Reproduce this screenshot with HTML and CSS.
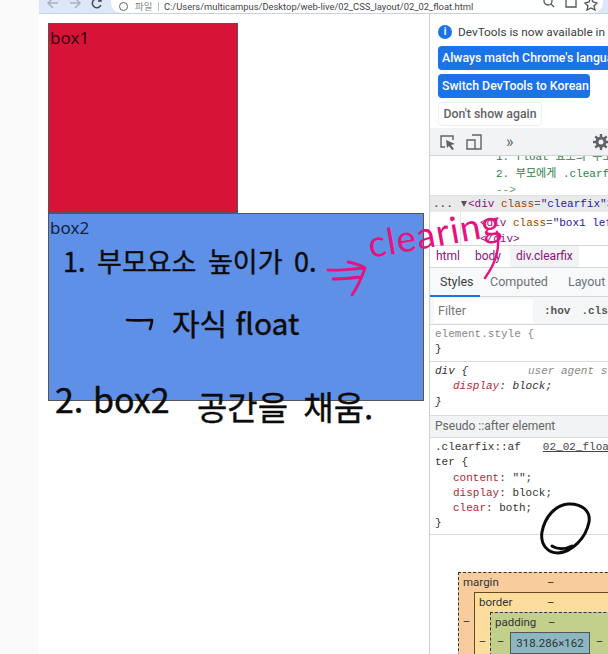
FILE: index.html
```html
<!DOCTYPE html>
<html lang="ko">
<head>
    <meta charset="UTF-8">
    <title>02_02_float.html</title>
    <link rel="stylesheet" href="styles.css">
</head>
<body>
    <div class="side-strip"></div>

    <div class="browser">
        <!-- browser toolbar, cut off by the top of the picture -->
        <header class="chrome">
            <svg class="nav-icons" width="72" height="13" viewBox="0 0 72 13" fill="none" stroke-width="1.5">
                <path d="M19 3H10M14 -2L9 3L14 8" stroke="#a9b2bf"/>
                <path d="M31 3H40M36 -2L41 3L36 8" stroke="#a9b2bf"/>
                <path d="M61 0A4.5 4.5 0 1 0 62 5M62 -2V1H59" stroke="#444a52"/>
            </svg>
            <div class="address">
                <span class="info-dot"></span>
                <span class="scheme">파일</span>
                <span class="sep"></span>
                <span class="url">C:/Users/multicampus/Desktop/web-live/02_CSS_layout/02_02_float.html</span>
                <svg class="addr-icons" width="56" height="13" viewBox="0 0 56 13" fill="none" stroke="#555" stroke-width="1.3">
                    <circle cx="5" cy="1" r="4"/>
                    <path d="M8 4L11 7"/>
                    <path d="M23 -2H33V7H23Z"/>
                    <path d="M48 -3L50 2L54 3L51 6L52 10L48 8L44 10L45 6L42 3L46 2Z"/>
                </svg>
            </div>
        </header>

        <div class="workspace">
            <main class="page">
                <div class="box box1">box1</div>
                <div class="box box2">box2</div>
            </main>

            <aside class="devtools">
                <section class="infobar">
                    <p class="info-line"><span class="info-icon">i</span>DevTools is now available in Korean</p>
                    <button class="btn btn-blue">Always match Chrome's language</button>
                    <button class="btn btn-blue btn-fit">Switch DevTools to Korean</button>
                    <button class="btn btn-white">Don't show again</button>
                </section>

                <div class="toolbar">
                    <svg width="16" height="16" viewBox="0 0 16 16" fill="none" stroke="#5f6368" stroke-width="1.4">
                        <path d="M5 13H1V2H13V6"/>
                        <path d="M6 6L15 10L11 11L14 15L12 16L9 12L7 14Z" fill="#5f6368" stroke="none"/>
                    </svg>
                    <svg width="16" height="16" viewBox="0 0 16 16" fill="none" stroke="#5f6368" stroke-width="1.4">
                        <path d="M6 1H15V15H1V6H9V15"/>
                    </svg>
                    <span class="tool-sep"></span>
                    <span class="more">»</span>
                    <span class="tool-sep tool-sep-right"></span>
                    <svg class="gear" width="16" height="16" viewBox="0 0 16 16" fill="none" stroke="#5f6368">
                        <circle cx="8" cy="8" r="4" stroke-width="3"/>
                        <path d="M8 0V3M8 13V16M0 8H3M13 8H16M2.3 2.3L4.4 4.4M11.6 11.6L13.7 13.7M2.3 13.7L4.4 11.6M11.6 4.4L13.7 2.3" stroke-width="2.4"/>
                    </svg>
                </div>

                <div class="source">
                    <div class="comment clipped">1. float 요소의 부모</div>
                    <div class="comment">2. 부모에게 .clearfix</div>
                    <div class="comment arrow">--&gt;</div>
                </div>

                <div class="dom">
                    <div class="dom-selected"><span class="dots">...</span><span class="caret"></span><span class="tag">&lt;div </span><span class="attr">class</span>=<span class="val">"clearfix"</span><span class="tag">&gt;</span></div>
                    <div class="dom-rest">
                        <div class="gutter"></div>
                        <div class="dom-lines">
                            <div><span class="tag">&lt;div </span><span class="attr">class</span>=<span class="val">"box1 left"</span></div>
                            <div class="tag">&lt;/div&gt;</div>
                        </div>
                    </div>
                </div>

                <nav class="crumbs">
                    <span>html</span>
                    <span>body</span>
                    <span class="crumb-on">div.clearfix</span>
                </nav>

                <nav class="tabs">
                    <span class="tab tab-on">Styles</span>
                    <span class="tab">Computed</span>
                    <span class="tab">Layout</span>
                </nav>

                <div class="filter">
                    <span class="filter-input">Filter</span>
                    <span class="filter-btn">:hov</span>
                    <span class="filter-btn">.cls</span>
                </div>

                <section class="rule rule-element">
                    <div class="muted">element.style {</div>
                    <div>}</div>
                </section>
                <section class="rule rule-agent">
                    <div class="rule-head"><i>div {</i><i class="muted agent">user agent stylesheet</i></div>
                    <div class="decl"><i><span class="prop">display</span>: block;</i></div>
                    <div><i>}</i></div>
                </section>
                <div class="pseudo">Pseudo ::after element</div>
                <section class="rule rule-pseudo">
                    <div class="rule-head"><span>.clearfix::af</span><span class="link">02_02_float.html</span></div>
                    <div>ter {</div>
                    <div class="decl"><span class="prop">content</span>: "";</div>
                    <div class="decl"><span class="prop">display</span>: block;</div>
                    <div class="decl"><span class="prop">clear</span>: both;</div>
                    <div>}</div>
                </section>

                <div class="boxmodel">
                    <div class="bm bm-margin">
                        <div class="bm-row"><span>margin</span><span class="bm-dash">–</span></div>
                        <div class="bm-mid">
                            <span class="bm-side">–</span>
                            <div class="bm bm-border">
                                <div class="bm-row"><span>border</span><span class="bm-dash">–</span></div>
                                <div class="bm-mid">
                                    <span class="bm-side">–</span>
                                    <div class="bm bm-padding">
                                        <div class="bm-row"><span>padding</span><span class="bm-dash">–</span></div>
                                        <div class="bm-mid">
                                            <span class="bm-side">–</span>
                                            <div class="bm-content">318.286×162</div>
                                            <span class="bm-side">–</span>
                                        </div>
                                    </div>
                                </div>
                            </div>
                        </div>
                    </div>
                </div>
            </aside>
        </div>
    </div>

    <!-- pen notes written over the screen -->
    <div class="ink">
        <span class="note note1">1. 부모요소 높이가 0.</span>
        <span class="note note2">자식 float</span>
        <span class="note note3">2. box2</span>
        <span class="note note4">공간을 채움.</span>
        <span class="note note-pink">clearing</span>
        <svg class="ink-marks" width="608" height="654" viewBox="0 0 608 654" fill="none" stroke-linecap="round" stroke-linejoin="round">
            <path d="M127 320C136 321 144 320 152 320C152 323 151 326 150 329" stroke="#0b0b0b" stroke-width="2.6"/>
            <path d="M328 270C340 271 352 269 364 268M333 279C342 279 352 278 361 277M348 262C354 263 360 265 365 268C362 277 358 286 352 295" stroke="#e5127f" stroke-width="2.8"/>
            <path d="M497 232C500 245 498 260 485 278" stroke="#e5127f" stroke-width="2.4"/>
            <path d="M568 504C556 505 545 516 542 532C540 545 548 553 558 553C572 552 586 538 589 522C591 510 580 503 568 504M552 546C558 550 566 549 572 546" stroke="#0b0b0b" stroke-width="3"/>
        </svg>
    </div>
</body>
</html>
```

FILE: styles.css
```css
* {
    margin: 0;
    padding: 0;
    box-sizing: border-box;
}

body {
    display: flex;
    width: 608px;
    height: 654px;
    overflow: hidden;
    background-color: #fff;
    font-family: 'Roboto', 'Noto Sans CJK KR', sans-serif;
    color: #303942;
}

.side-strip {
    width: 39px;
    flex-shrink: 0;
    background-color: #fafafa;
}

.browser {
    flex: 1;
    min-width: 0;
    display: flex;
    flex-direction: column;
}

/* browser toolbar */
.chrome {
    height: 14px;
    flex-shrink: 0;
    display: flex;
    align-items: flex-end;
    background-color: #dce7f8;
    border-bottom: 1px solid #c9d3e0;
    overflow: hidden;
}

.nav-icons {
    flex-shrink: 0;
}

.address {
    flex: 1;
    height: 13px;
    display: flex;
    align-items: flex-end;
    gap: 5px;
    padding-left: 8px;
    padding-right: 4px;
    background-color: #fff;
    border-bottom-left-radius: 10px;
    border-bottom-right-radius: 10px;
    margin-right: 5px;
    font-size: 9.4px;
    line-height: 13px;
    color: #3f444a;
    white-space: nowrap;
}

.info-dot {
    width: 9px;
    height: 9px;
    border: 1px solid #666;
    border-radius: 50%;
    flex-shrink: 0;
    margin-bottom: 2px;
    margin-right: 2px;
}

.scheme {
    width: 18px;
    flex-shrink: 0;
    color: #888;
}

.sep {
    width: 1px;
    height: 9px;
    margin-bottom: 2px;
    background-color: #bbb;
}

.url {
    flex: 1;
    min-width: 0;
}

.addr-icons {
    flex-shrink: 0;
}

.workspace {
    flex: 1;
    min-height: 0;
    display: flex;
}

/* the page under test */
.page {
    width: 390px;
    flex-shrink: 0;
    padding: 9px 5px 0 9px;
    background-color: #fff;
}

.box {
    border: 1px solid #555;
    padding-left: 1px;
    font-family: 'Noto Sans', sans-serif;
    font-size: 17px;
    line-height: 28px;
}

.box1 {
    width: 190px;
    height: 190px;
    background-color: #d81338;
    color: #3b0410;
}

.box2 {
    height: 188px;
    background-color: #5f90e8;
    color: #10233f;
}

/* devtools panel */
.devtools {
    flex: 1;
    min-width: 0;
    border-left: 1px solid #cdd1d6;
    overflow: hidden;
    font-size: 12px;
    white-space: nowrap;
}

.infobar {
    height: 114px;
    padding: 8px 0 0 8px;
    display: flex;
    flex-direction: column;
    align-items: flex-start;
    gap: 4px;
}

.info-line {
    height: 20px;
    display: flex;
    align-items: center;
    gap: 6px;
    font-size: 11.8px;
    color: #3c4043;
}

.info-icon {
    width: 14px;
    height: 14px;
    flex-shrink: 0;
    border-radius: 50%;
    background-color: #1a73e8;
    color: #fff;
    font-size: 10px;
    font-weight: 700;
    line-height: 14px;
    text-align: center;
}

.btn {
    height: 24px;
    padding: 0 3px;
    border-radius: 4px;
    border: 1px solid transparent;
    font-family: inherit;
    font-size: 12.3px;
    font-weight: 500;
    white-space: nowrap;
}

.btn-blue {
    width: 190px;
    background-color: #1a73e8;
    color: #fff;
    text-align: left;
}

.btn-fit {
    width: 152px;
}

.btn-white {
    width: 104px;
    background-color: #fff;
    border-color: #eceef0;
    color: #5f6368;
}

.toolbar {
    height: 28px;
    display: flex;
    align-items: center;
    gap: 10px;
    padding-left: 10px;
    background-color: #f1f3f4;
    border-bottom: 1px solid #d0d3d6;
}

.toolbar svg {
    flex-shrink: 0;
}

.tool-sep {
    width: 1px;
    height: 16px;
    margin: 0 2px;
    background-color: #c4c7ca;
}

.tool-sep-right {
    margin-left: 58px;
    margin-right: 1px;
}

.more {
    font-size: 16px;
    line-height: 16px;
    color: #5f6368;
}

.source {
    height: 40px;
    overflow: hidden;
    padding-left: 66px;
    font-family: 'Liberation Mono', 'Noto Sans CJK KR', monospace;
    font-size: 11px;
    line-height: 16px;
    color: #2f7d46;
    border-bottom: 1px solid #e2e3e4;
}

.clipped {
    margin-top: -7px;
    margin-bottom: 1px;
}

.arrow {
    color: #5aa86c;
}

.dom {
    font-family: 'Liberation Mono', monospace;
    font-size: 11px;
    color: #5f6368;
}

.dom-selected {
    height: 16px;
    display: flex;
    align-items: center;
    background-color: #e9e9e9;
    line-height: 16px;
    padding-left: 3px;
}

.dom-selected span {
    flex-shrink: 0;
}

.dots {
    width: 28px;
    color: #555;
    font-weight: 700;
}

.caret {
    width: 0;
    height: 0;
    margin-right: 1px;
    border-left: 3px solid transparent;
    border-right: 3px solid transparent;
    border-top: 6px solid #555;
}

.tag {
    color: #881280;
    white-space: pre;
}

.attr {
    color: #994500;
}

.val {
    color: #1a1aa6;
}

.dom-rest {
    height: 34px;
    display: flex;
    border-bottom: 1px solid #d5d7da;
}

.gutter {
    width: 31px;
    flex-shrink: 0;
    border-right: 1px solid #e4e5e6;
}

.dom-lines {
    padding: 3px 0 0 19px;
    line-height: 16px;
}

.crumbs {
    height: 22px;
    display: flex;
    border-bottom: 1px solid #d5d7da;
    font-size: 12px;
    line-height: 21px;
    color: #881280;
}

.crumbs span {
    padding: 0 6px;
    margin-right: 3px;
}

.crumb-on {
    background-color: #f1f3f4;
}

.tabs {
    height: 29px;
    display: flex;
    background-color: #f8f9fa;
    border-bottom: 1px solid #d5d7da;
    color: #6e7378;
    font-size: 12.5px;
    line-height: 28px;
}

.tab {
    padding: 0 10px;
}

.tab-on {
    width: 50px;
    color: #3c4043;
    border-bottom: 2px solid #1a73e8;
    height: 29px;
}

.filter {
    height: 28px;
    display: flex;
    align-items: center;
    padding-left: 4px;
    background-color: #f5f6f7;
    border-bottom: 1px solid #d5d7da;
    font-family: 'Liberation Mono', monospace;
    font-size: 11px;
    font-weight: 700;
    color: #555;
}

.filter span {
    flex-shrink: 0;
}

.filter-input {
    width: 99px;
    height: 24px;
    margin-right: 11px;
    padding-left: 4px;
    background-color: #fff;
    font-family: 'Roboto', sans-serif;
    font-size: 12.5px;
    font-weight: 400;
    line-height: 24px;
    color: #757575;
}

.filter-btn {
    margin-right: 11px;
}

.rule {
    padding: 2px 0 0 5px;
    font-family: 'Liberation Mono', monospace;
    font-size: 11px;
    line-height: 15.3px;
    color: #333;
    border-bottom: 1px solid #d9dbdd;
}

.rule-element {
    height: 37px;
}

.rule-agent {
    height: 54px;
}

.rule-head {
    display: flex;
    justify-content: flex-start;
}

.rule-head i:first-child {
    flex-shrink: 0;
}

.muted {
    color: #888;
}

.agent {
    margin-left: 60px;
    flex-shrink: 0;
}

.decl {
    padding-left: 18px;
}

.prop {
    color: #b02a37;
}

.pseudo {
    height: 22px;
    padding-left: 5px;
    background-color: #f1f3f4;
    border-bottom: 1px solid #d9dbdd;
    font-size: 12px;
    line-height: 21px;
    color: #666;
}

.rule-pseudo {
    height: 97px;
}

.link {
    margin-left: 22px;
    flex-shrink: 0;
    text-decoration: underline;
    color: #444;
}

/* box model diagram */
.boxmodel {
    padding: 37px 0 0 28px;
    font-size: 11.5px;
    color: #333;
}

.bm {
    border: 1px dashed #333;
}

.bm-margin {
    width: 170px;
    height: 120px;
    background-color: #f9cc9d;
}

.bm-border {
    flex: 1;
    height: 100px;
    background-color: #fddd9b;
    border-style: solid;
    border-color: #6a4a20;
}

.bm-padding {
    flex: 1;
    height: 80px;
    background-color: #c3d08b;
}

.bm-row {
    height: 19px;
    position: relative;
    padding-left: 4px;
    line-height: 19px;
}

.bm-dash {
    position: absolute;
    left: 88px;
    top: 0;
}

.bm-border .bm-dash {
    left: 72px;
}

.bm-padding .bm-dash {
    left: 57px;
}

.bm-mid {
    display: flex;
    align-items: flex-start;
}

.bm-side {
    width: 15px;
    flex-shrink: 0;
    padding-top: 22px;
    text-align: center;
}

.bm-padding .bm-side {
    width: 19px;
    padding-top: 2px;
}

.bm-content {
    width: 80px;
    height: 22px;
    flex-shrink: 0;
    background-color: #8cb6c0;
    border: 1px solid #555;
    font-size: 11.5px;
    line-height: 20px;
    text-align: center;
}

/* pen notes */
.ink {
    position: absolute;
    inset: 0;
    width: 608px;
    height: 654px;
    overflow: hidden;
    pointer-events: none;
}

.ink-marks {
    position: absolute;
    left: 0;
    top: 0;
}

.note {
    position: absolute;
    font-family: 'Noto Sans CJK KR', sans-serif;
    font-weight: 400;
    white-space: nowrap;
    color: #0b0b0b;
    -webkit-text-stroke: 0.4px #0b0b0b;
}

.note1 {
    left: 63px;
    top: 240px;
    font-size: 27px;
    line-height: 42px;
    word-spacing: 4px;
}

.note2 {
    left: 172px;
    top: 299px;
    font-size: 30px;
    line-height: 46px;
}

.note3 {
    left: 55px;
    top: 376px;
    font-size: 34px;
    line-height: 46px;
}

.note4 {
    left: 197px;
    top: 384px;
    font-size: 33px;
    line-height: 44px;
    word-spacing: 6px;
}

.note-pink {
    left: 372px;
    top: 222px;
    font-family: 'Lato', sans-serif;
    font-weight: 400;
    font-size: 37px;
    line-height: 44px;
    letter-spacing: 1px;
    color: #e5127f;
    -webkit-text-stroke: 0;
    transform: rotate(-10deg);
    transform-origin: left bottom;
}
```
